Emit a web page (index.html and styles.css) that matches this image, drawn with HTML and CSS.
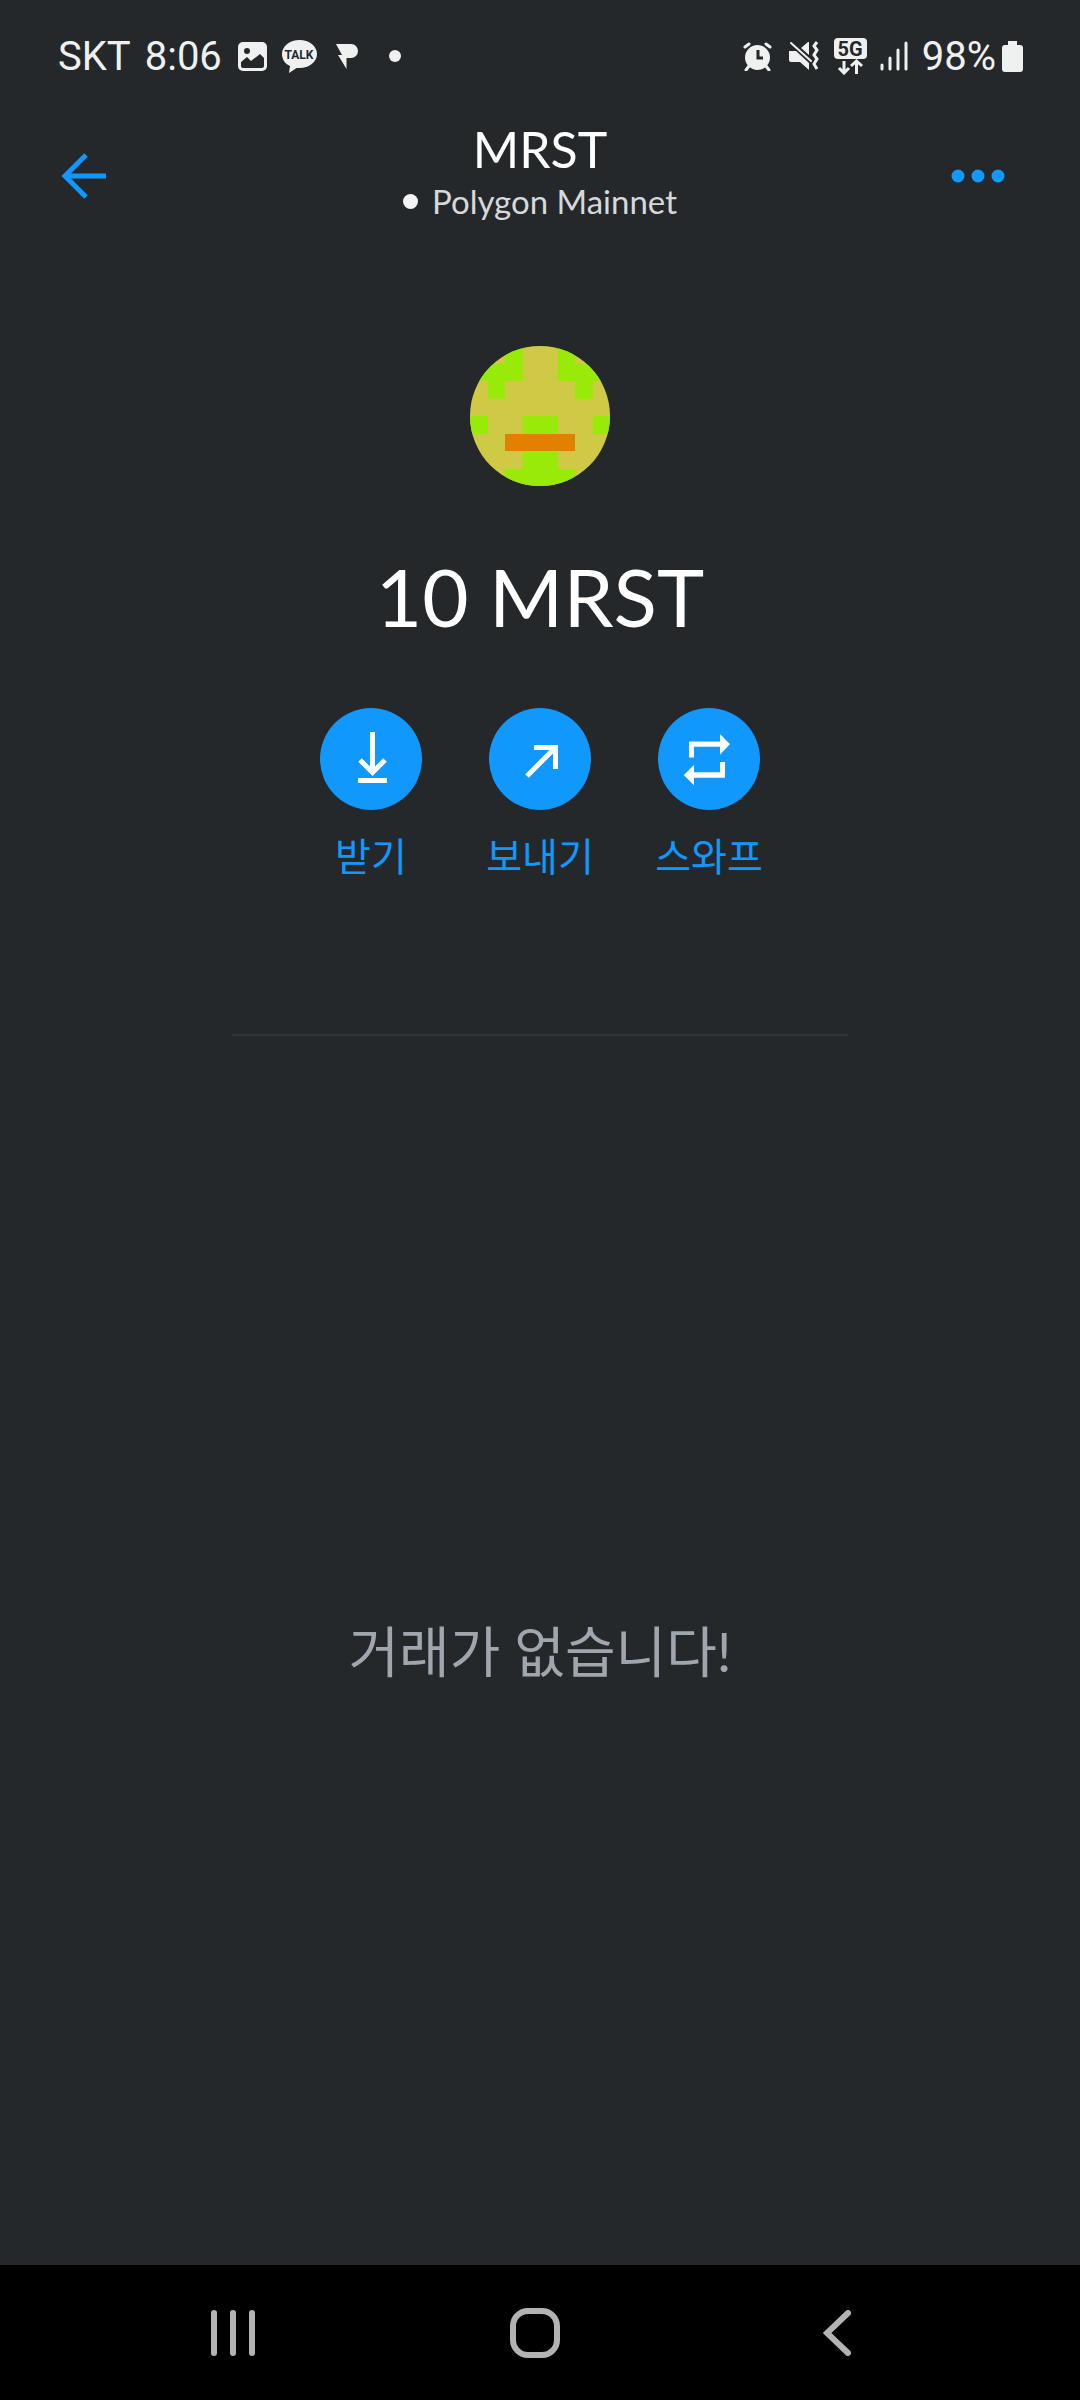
FILE: index.html
```html
<!DOCTYPE html>
<html lang="ko">
<head>
  <meta charset="UTF-8" />
  <meta name="viewport" content="width=device-width, initial-scale=1.0" />
  <title>MRST</title>
  <link rel="stylesheet" href="styles.css">
</head>
<body>

  <!-- Status bar -->
  <div class="status-bar">
    <div class="status-left">
      <span>SKT</span>
      <span class="clock">8:06</span>
      <svg class="icon-image" width="29" height="29" viewBox="0 0 29 29">
        <rect width="29" height="29" rx="5" fill="#eff1f1"/>
        <circle cx="9" cy="9" r="3" fill="#24282b"/>
        <path d="M3 20l6-5 4 4 9-7 4 4v8q0 2-2 2H5q-2 0-2-2z" fill="#24282b"/>
      </svg>
      <svg class="icon-talk" width="35" height="33" viewBox="0 0 35 33">
        <path d="M17.500 0C27 0 35 6 35 14s-8 14-17.500 14h-3L7 33l1-7C3 24 0 19 0 14 0 6 8 0 17.500 0z" fill="#eff1f1"/>
        <text x="17" y="19" text-anchor="middle">TALK</text>
      </svg>
      <svg class="icon-p" width="22" height="25" viewBox="0 0 22 25">
        <path d="M0 0h15a7 7 0 0 1 0 14h-4.500v11L2 11h4z" fill="#eff1f1"/>
      </svg>
      <span class="more-dot"></span>
    </div>
    <div class="status-right">
      <svg width="29" height="29" viewBox="0 0 29 29">
        <circle cx="14.500" cy="15.500" r="12.500" fill="#eff1f1"/>
        <path d="M2 5l4-3M27 5l-4-3M6 24l-3 4M23 24l3 4" stroke="#eff1f1" stroke-width="3" stroke-linecap="round"/>
        <path d="M15 8v8h5" fill="none" stroke="#24282b" stroke-width="3"/>
      </svg>
      <svg class="icon-mute" width="31" height="30" viewBox="0 0 31 30">
        <path d="M1 10h7l13 12v7l-9-8H3q-2 0-2-2zM13 7l7-6h1v13z" fill="#eff1f1"/>
        <path d="M3 2l20 18" stroke="#eff1f1" stroke-width="2" stroke-linecap="round"/>
        <path d="M29 1l-3 4 3 4-3 5 3 4-3 5 3 5" fill="none" stroke="#eff1f1" stroke-width="3"/>
      </svg>
      <svg class="icon-5g" width="33" height="37" viewBox="0 0 33 37">
        <rect width="33" height="21" rx="4" fill="#eff1f1"/>
        <text x="16" y="18" text-anchor="middle">5G</text>
        <path d="M10 23v12M5 30l5 5 5-5M22.500 36V24M17 28l5.500-5 5.500 5" fill="none" stroke="#eff1f1" stroke-width="3"/>
      </svg>
      <svg class="icon-signal" width="28" height="30" viewBox="0 0 28 30">
        <path d="M2 24v4M10 17v11M18 9v19M26 2v26" stroke="#eff1f1" stroke-width="3" stroke-linecap="round"/>
      </svg>
      <span class="battery-text">98%</span>
      <svg class="icon-battery" width="21" height="31" viewBox="0 0 21 31">
        <path d="M6 0h9v4h3q3 0 3 3v21q0 3-3 3H3q-3 0-3-3V7q0-3 3-3h3z" fill="#eff1f1"/>
      </svg>
    </div>
  </div>

  <!-- Header -->
  <header class="header">
    <button class="header-btn back-btn" aria-label="뒤로">
      <svg width="46" height="46" viewBox="0 0 46 46">
        <path d="M45 23H5M25 2L4 23l21 21" fill="none" stroke="#1098fc" stroke-width="5"/>
      </svg>
    </button>
    <div class="header-title">
      <h1>MRST</h1>
      <p><span class="network-dot"></span>Polygon Mainnet</p>
    </div>
    <button class="header-btn" aria-label="더보기">
      <svg width="54" height="14" viewBox="0 0 54 14">
        <g fill="#1098fc">
          <circle cx="7" cy="7" r="6.500"/>
          <circle cx="27" cy="7" r="6.500"/>
          <circle cx="47" cy="7" r="6.500"/>
        </g>
      </svg>
    </button>
  </header>

  <!-- Token overview -->
  <main class="asset">
    <svg class="avatar" viewBox="0 0 8 8" shape-rendering="crispEdges">
      <rect width="8" height="8" fill="#cfca45"/>
      <path d="M2 0h1v2H2v1H1V2H0V1h2zM5 0h1v1h2v1H7v1H6V2H5zM0 4h1v1H0zM7 4h1v1H7zM3 4h2v3h1v1H2V7h1z" fill="#98ea08"/>
      <rect x="2" y="5" width="4" height="1" fill="#e28100"/>
    </svg>
    <p class="balance">10 MRST</p>

    <div class="actions">
      <button class="action">
        <svg viewBox="0 0 102 102">
          <circle cx="51" cy="51" r="51" fill="#1098fc"/>
          <path d="M52.500 24v40M40 52l12.500 12.500L65 52M38 72.500h29" fill="none" stroke="#fff" stroke-width="5"/>
        </svg>
        <span>받기</span>
      </button>
      <button class="action">
        <svg viewBox="0 0 102 102">
          <circle cx="51" cy="51" r="51" fill="#1098fc"/>
          <path d="M38 68l28-28M45 39.500h21.500V61" fill="none" stroke="#fff" stroke-width="5"/>
        </svg>
        <span>보내기</span>
      </button>
      <button class="action">
        <svg viewBox="0 0 102 102">
          <circle cx="51" cy="51" r="51" fill="#1098fc"/>
          <path d="M31 49.500v-16h31V26l10 10.300-10 10.300V38.700H36v10.800zM67 54v15.700H36v7.600L25.700 67 36 57v7.300h26V54z" fill="#fff"/>
        </svg>
        <span>스와프</span>
      </button>
    </div>

    <hr class="divider">

    <div class="empty">거래가 없습니다!</div>
  </main>

  <!-- System navigation -->
  <nav class="nav-bar">
    <button aria-label="최근 앱">
      <svg width="46" height="46" viewBox="0 0 46 46">
        <path d="M4 3v40M23 3v40M42 3v40" stroke="#b3b3b3" stroke-width="6" stroke-linecap="round"/>
      </svg>
    </button>
    <button aria-label="홈">
      <svg width="50" height="50" viewBox="0 0 50 50">
        <rect x="3" y="3" width="44" height="44" rx="15" fill="none" stroke="#b3b3b3" stroke-width="6"/>
      </svg>
    </button>
    <button aria-label="뒤로 가기">
      <svg width="28" height="46" viewBox="0 0 28 46">
        <path d="M25 3L4 23l21 20" fill="none" stroke="#b3b3b3" stroke-width="6" stroke-linecap="round"/>
      </svg>
    </button>
  </nav>

</body>
</html>
```

FILE: styles.css
```css
* {
  box-sizing: border-box;
}

body {
  margin: 0;
  min-height: 100vh;
  display: flex;
  flex-direction: column;
  font-family: Lato, "Noto Sans CJK KR", sans-serif;
  background-color: #24282b;
  color: white;
}

h1, p {
  margin: 0;
  font-weight: normal;
}

button {
  padding: 0;
  border: none;
  background: none;
  font-family: inherit;
  cursor: pointer;
}

svg {
  display: block;
}

/* Status bar */
.status-bar {
  display: flex;
  justify-content: space-between;
  height: 112px;
  padding: 0 57px 0 58px;
  font-family: Roboto, sans-serif;
  font-size: 40px;
  color: #eff1f1;
}

.status-left,
.status-right {
  display: flex;
  align-items: center;
}

.clock {
  margin-left: 14px;
}

.icon-image {
  margin-left: 16px;
}

.icon-talk {
  margin-left: 15px;
}

.icon-talk text {
  font: bold 12px Roboto, sans-serif;
  fill: #24282b;
}

.icon-p {
  margin-left: 19px;
}

.more-dot {
  width: 12px;
  height: 12px;
  margin-left: 31px;
  border-radius: 50%;
  background: #eff1f1;
}

.icon-mute {
  margin-left: 16px;
}

.icon-5g {
  margin-left: 15px;
}

.icon-5g text {
  font: bold 20px Roboto, sans-serif;
  fill: #24282b;
}

.icon-signal {
  margin-left: 13px;
}

.battery-text {
  margin-left: 14px;
}

.icon-battery {
  margin-left: 6px;
}

/* Header */
.header {
  display: flex;
  justify-content: space-between;
  align-items: center;
  height: 128px;
  padding: 0 51px;
}

.header-btn {
  width: 78px;
  height: 64px;
  display: flex;
  align-items: center;
}

.back-btn {
  padding-left: 10px;
}

.header-title {
  padding-bottom: 10px;
  text-align: center;
}

.header-title h1 {
  font-size: 50px;
  line-height: 60px;
}

.header-title p {
  display: flex;
  align-items: center;
  font-size: 33px;
  line-height: 44px;
  color: #d6d9dc;
}

.network-dot {
  width: 15px;
  height: 15px;
  margin-right: 14px;
  border-radius: 50%;
  background: #f2f4f6;
}

/* Token overview */
.asset {
  flex: 1;
  display: flex;
  flex-direction: column;
  align-items: center;
  padding-top: 106px;
}

.avatar {
  width: 140px;
  height: 140px;
  border-radius: 50%;
}

.balance {
  margin-top: 60px;
  font-size: 80px;
  line-height: 100px;
}

.actions {
  display: flex;
  gap: 49px;
  margin-top: 62px;
}

.action {
  width: 120px;
  display: flex;
  flex-direction: column;
  align-items: center;
  gap: 18px;
  font-size: 39px;
  line-height: 56px;
  color: #1098fc;
}

.action svg {
  width: 102px;
  height: 102px;
}

.divider {
  width: 57%;
  height: 2px;
  margin: 150px 0 0;
  border: none;
  background: #2f3437;
}

.empty {
  flex: 1;
  display: flex;
  align-items: center;
  padding-bottom: 6px;
  font-size: 55px;
  color: #9fa6ae;
}

/* System navigation */
.nav-bar {
  display: flex;
  align-items: center;
  height: 135px;
  padding: 0 92px 0 82px;
  background: black;
}

.nav-bar button {
  flex: 1;
  display: flex;
  justify-content: center;
}
```
